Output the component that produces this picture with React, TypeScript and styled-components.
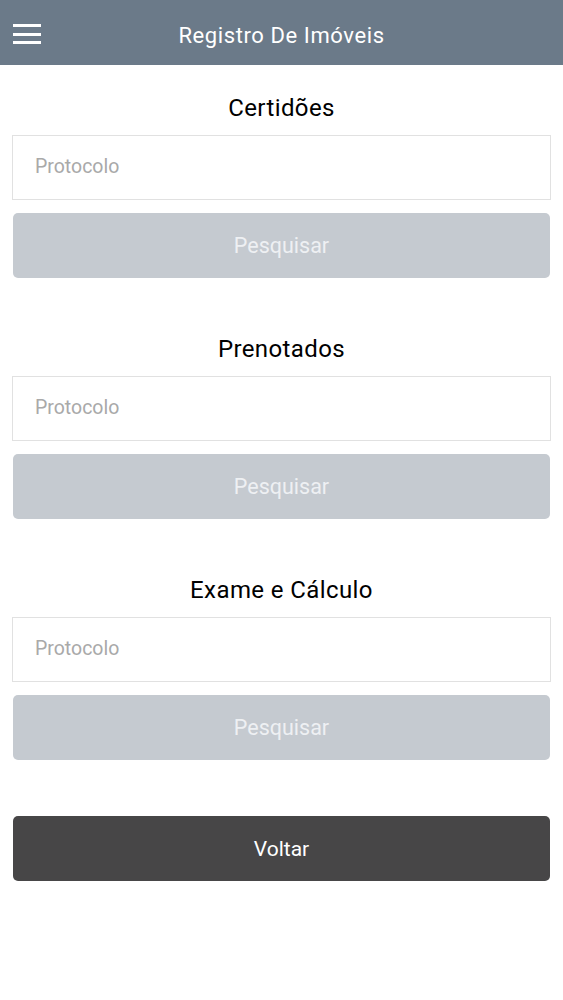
import React from 'react';
import styled, { createGlobalStyle } from 'styled-components';

const GlobalStyle = createGlobalStyle`
  html, body {
    margin: 0;
    padding: 0;
    background: #ffffff;
    font-family: Roboto, 'Liberation Sans', sans-serif;
  }
  * {
    box-sizing: border-box;
  }
`;

const Page = styled.div`
  width: 563px;
  min-height: 1000px;
  background: #ffffff;
`;

const Header = styled.header`
  position: relative;
  height: 65px;
  padding-top: 6px;
  background: #6b7a89;
  display: flex;
  align-items: center;
  justify-content: center;
`;

const MenuButton = styled.button`
  position: absolute;
  left: 13px;
  top: 24px;
  width: 28px;
  height: 20px;
  padding: 0;
  border: none;
  background: transparent;
  display: flex;
  flex-direction: column;
  justify-content: space-between;
  cursor: pointer;

  span {
    display: block;
    height: 3px;
    width: 100%;
    background: #ffffff;
  }
`;

const HeaderTitle = styled.h1`
  margin: 0;
  color: #ffffff;
  font-size: 22px;
  font-weight: 400;
  letter-spacing: 0.6px;
`;

const Content = styled.main`
  padding: 28px 12px 0;
  display: flex;
  flex-direction: column;
  gap: 56px;
`;

const Section = styled.section`
  display: flex;
  flex-direction: column;
`;

const SectionTitle = styled.h2`
  margin: 0 0 12px;
  height: 30px;
  line-height: 30px;
  text-align: center;
  color: #000000;
  font-size: 24px;
  font-weight: 400;
  letter-spacing: 0.4px;
`;

const Input = styled.input`
  height: 65px;
  width: 100%;
  border: 1.5px solid #e1e1e1;
  padding: 0 22px 3px;
  font-family: inherit;
  font-size: 19.5px;
  color: #333;
  outline: none;

  &::placeholder {
    color: #a9a9a9;
  }
`;

const Button = styled.button<{ $dark?: boolean }>`
  margin: ${(p) => (p.$dark ? '0 1px' : '13px 1px 0')};
  height: 65px;
  border: none;
  border-radius: 5px;
  background: ${(p) => (p.$dark ? '#474647' : '#c5cad0')};
  color: ${(p) => (p.$dark ? '#ffffff' : '#eef0f3')};
  font-family: inherit;
  font-size: ${(p) => (p.$dark ? '21px' : '21.5px')};
  font-weight: 400;
  cursor: pointer;
`;

const sections = ['Certidões', 'Prenotados', 'Exame e Cálculo'];

export default function App() {
  return (
    <Page>
      <GlobalStyle />
      <Header>
        <MenuButton aria-label="menu">
          <span />
          <span />
          <span />
        </MenuButton>
        <HeaderTitle>Registro De Imóveis</HeaderTitle>
      </Header>
      <Content>
        {sections.map((title) => (
          <Section key={title}>
            <SectionTitle>{title}</SectionTitle>
            <Input placeholder="Protocolo" />
            <Button>Pesquisar</Button>
          </Section>
        ))}
        <Button $dark>Voltar</Button>
      </Content>
    </Page>
  );
}
